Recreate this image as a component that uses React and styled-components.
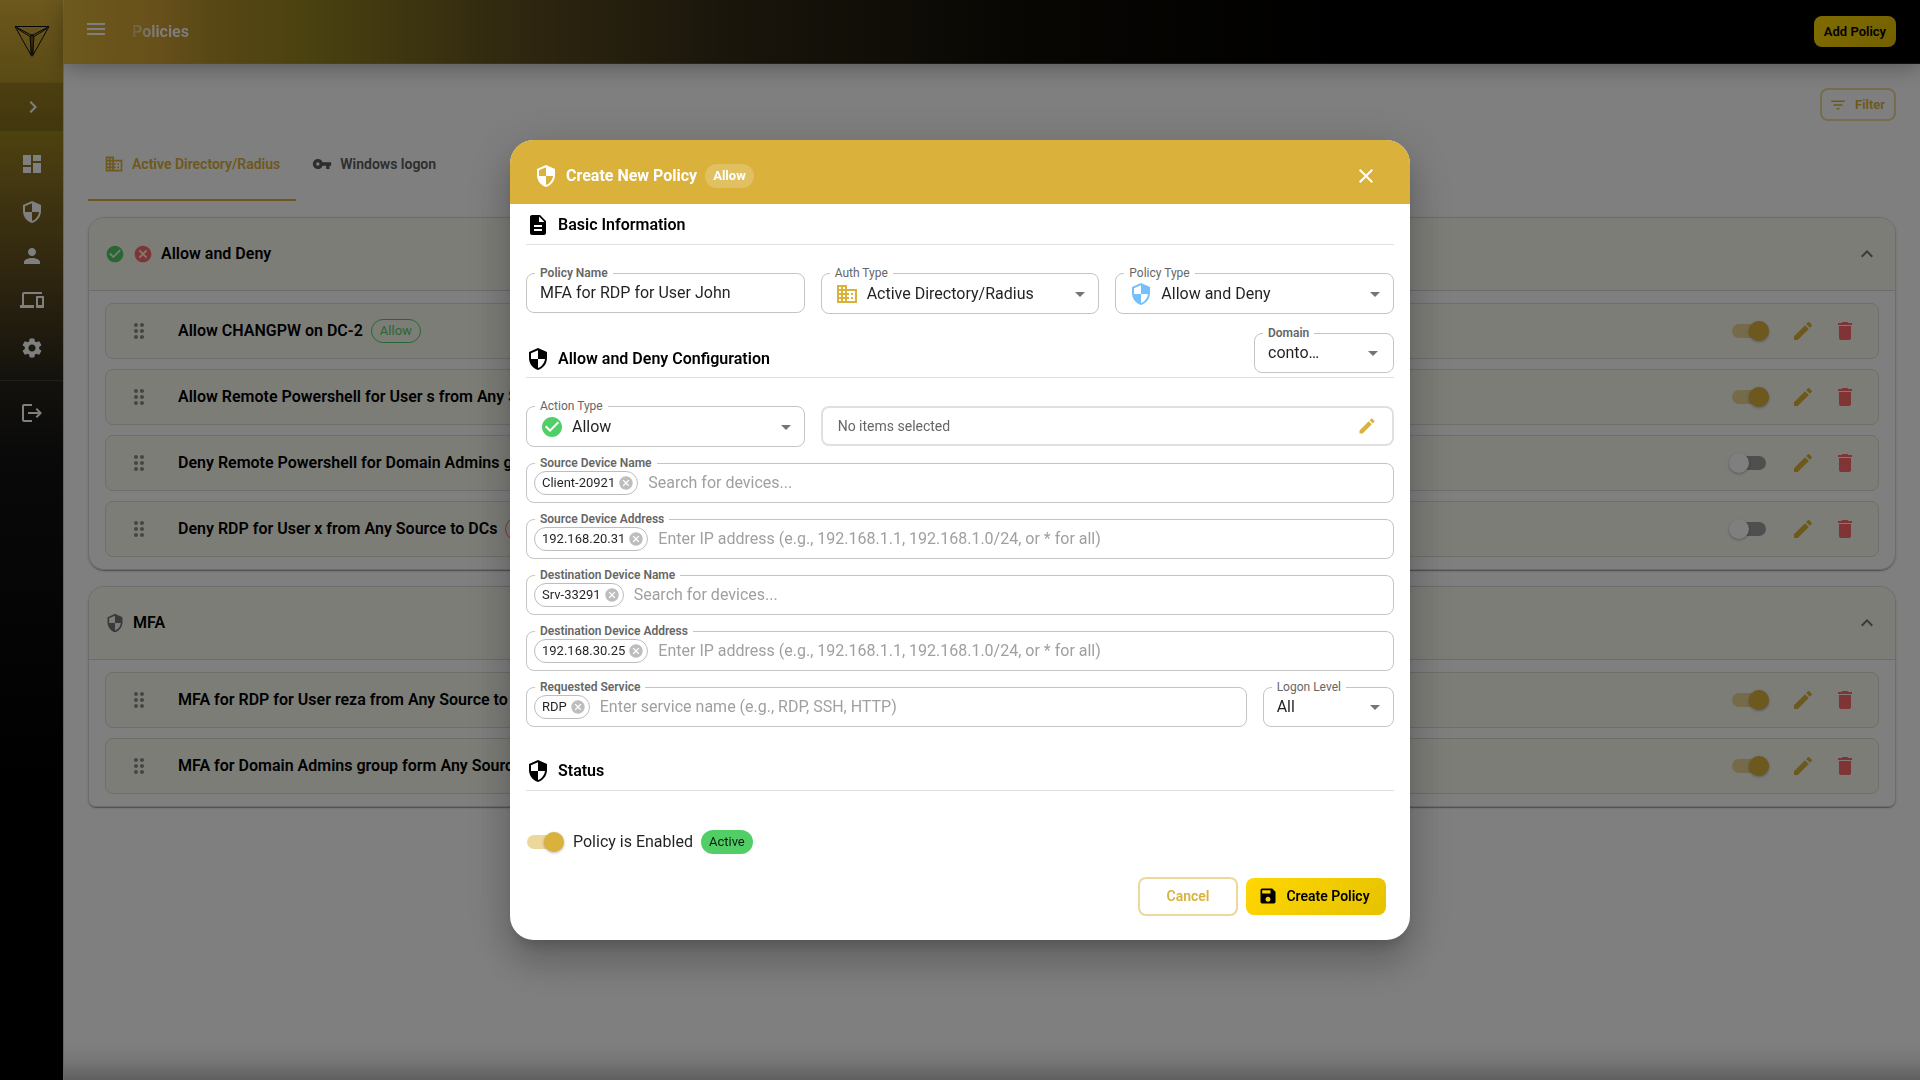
import React, { useId, useState } from 'react'
import styled, { createGlobalStyle, ThemeProvider, css } from 'styled-components'
import {
  MdArrowDropDown,
  MdBusiness,
  MdCancel,
  MdCheckCircle,
  MdChevronRight,
  MdClose,
  MdDashboard,
  MdDelete,
  MdDescription,
  MdDevices,
  MdDragIndicator,
  MdEdit,
  MdExpandLess,
  MdFilterList,
  MdLogout,
  MdMenu,
  MdPerson,
  MdSave,
  MdSecurity,
  MdSettings,
  MdVpnKey,
} from 'react-icons/md'

const theme = {
  color: {
    gold: '#dab13a',
    goldSoft: 'rgba(218, 177, 58, 0.5)',
    green: '#51cf66',
    red: '#ff6b6b',
    blue: '#74c0fc',
    panel: '#fafbf1',
    line: '#e0e0e0',
    outline: '#c4c4c4',
    muted: '#666666',
    icon: '#757575',
  },
}

const GlobalStyle = createGlobalStyle`
  * {
    box-sizing: border-box;
  }
  body {
    margin: 0;
    font-family: Roboto, 'Liberation Sans', sans-serif;
    font-size: 16px;
    line-height: 24px;
    color: #000;
    background: #fff;
  }
  button, input, select {
    font: inherit;
    color: inherit;
  }
  button {
    cursor: pointer;
  }
  svg {
    display: block;
    flex: none;
  }
`

const Page = styled.div`
  display: flex;
  min-height: 100vh;
`

const Sidebar = styled.aside`
  flex: none;
  width: 64px;
  border-right: 1px solid #d0d0d0;
  background: linear-gradient(180deg, #dab13a 0, #9c8420 130px, #5c4a20 280px, #26241a 380px, #121212 460px, #000 800px);
  color: #fff;
`

const Logo = styled.a`
  display: flex;
  justify-content: center;
  align-items: center;
  height: 82px;
  color: #111;
`

const Toggle = styled.button`
  display: flex;
  justify-content: center;
  align-items: center;
  width: 100%;
  height: 50px;
  padding: 0 0 0 2px;
  color: #fff;
  background: rgba(0, 0, 0, 0.15);
  border: solid rgba(218, 177, 58, 0.3);
  border-width: 1px 0;
`

const NavList = styled.nav`
  display: flex;
  flex-direction: column;
  padding: 8px 0;
  border-bottom: ${({ $divided }) => ($divided ? '1px solid rgba(255, 255, 255, 0.12)' : 'none')};
`

const NavLink = styled.a`
  display: flex;
  justify-content: center;
  align-items: center;
  height: ${({ $compact }) => ($compact ? 40 : 48)}px;
  color: #fff;
`

const Main = styled.main`
  flex: 1;
  min-width: 0;
`

const TopBar = styled.header`
  display: flex;
  align-items: center;
  height: 64px;
  padding: 0 24px 0 20px;
  border-bottom: 1px solid rgba(218, 177, 58, 0.2);
  background: linear-gradient(
    90deg,
    #dab13a 0,
    #d0a034 5%,
    #b0902c 8%,
    #968420 13%,
    #5c4c20 25%,
    #332b18 36%,
    #100d06 52%,
    #000 70%
  );
  box-shadow: 0 4px 20px rgba(0, 0, 0, 0.3);
`

const IconButton = styled.button`
  display: flex;
  padding: 0;
  border: 0;
  background: none;
  color: ${({ theme, $tone }) => theme.color[$tone] || $tone};
`

const MenuButton = styled(IconButton)`
  padding-bottom: 5px;
`

const PageTitle = styled.h1`
  flex: 1;
  margin: 0 0 0 24px;
  font-size: 16px;
  font-weight: 600;

  span {
    color: transparent;
    background: linear-gradient(90deg, #dcc078 0, #fff 22px);
    background-clip: text;
  }
`

const Button = styled.button`
  display: flex;
  align-items: center;
  justify-content: center;
  gap: 8px;
  border: 0;
  border-radius: 8px;
  font-weight: 600;
  font-size: ${({ $small }) => ($small ? 13 : 14)}px;
  padding: ${({ $small }) => ($small ? '4px 10px' : '6px 16px 7px 12px')};
  line-height: ${({ $small }) => ($small ? 23 : 24)}px;
  ${({ theme, $outlined }) =>
    $outlined
      ? css`
          color: ${theme.color.gold};
          background: transparent;
          border: 2px solid ${theme.color.goldSoft};
        `
      : css`
          color: #000;
          background: linear-gradient(135deg, #ffd700, #e6c200);
        `}
`

const FilterButton = styled(Button)`
  height: 33px;
  padding: 0 9px 0 7px;
`

const CancelButton = styled(Button)`
  width: 100px;
  height: 39px;
  padding: 0 0 1px;
`

const SubmitButton = styled(Button)`
  min-width: 140px;
`

const Content = styled.div`
  padding: 24px;
`

const Tools = styled.div`
  display: flex;
  justify-content: flex-end;
`

const TabList = styled.div`
  display: flex;
  margin: 8px 0 16px;
`

const Tab = styled.button`
  display: flex;
  align-items: center;
  gap: 8px;
  height: 72px;
  padding: 0 16px;
  border: 0;
  border-bottom: 2px solid ${({ theme, $active }) => ($active ? theme.color.gold : 'transparent')};
  background: none;
  color: ${({ theme, $active }) => ($active ? theme.color.gold : '#5a5a5a')};
  font-size: 14px;
  font-weight: 600;
`

const Group = styled.section`
  margin-bottom: 16px;
  border: 1px solid #d8d8d8;
  border-radius: 16px;
  box-shadow: 0 2px 1px -1px rgba(0, 0, 0, 0.2), 0 1px 1px rgba(0, 0, 0, 0.14), 0 1px 3px rgba(0, 0, 0, 0.12);

  &:last-child {
    border-bottom-left-radius: 8px;
    border-bottom-right-radius: 8px;
  }
`

const GroupHeader = styled.header`
  display: flex;
  align-items: center;
  gap: 8px;
  height: 73px;
  padding: 0 16px;
  border-bottom: 1px solid #d8d8d8;
  border-radius: 15px 15px 0 0;
  background: ${({ theme }) => theme.color.panel};
  color: #757575;
`

const GroupTitle = styled.h2`
  flex: 1;
  margin: 0;
  color: #000;
  font-size: 16px;
  font-weight: 600;
`

const Rows = styled.ul`
  display: flex;
  flex-direction: column;
  gap: 10px;
  margin: 0;
  padding: 12px 16px;
  list-style: none;
`

const Row = styled.li`
  display: flex;
  align-items: center;
  height: 56px;
  padding: 0 21px;
  border: 1px solid #dcdcd4;
  border-radius: 8px;
  background: ${({ theme }) => theme.color.panel};
  color: #8a8a8a;
`

const RowName = styled.div`
  flex: 1;
  display: flex;
  align-items: center;
  gap: 8px;
  margin-left: 27px;
  color: #000;
  font-weight: 600;
  white-space: nowrap;
`

const RowActions = styled.div`
  display: flex;
  align-items: center;
  gap: 18px;
  margin-left: 25px;
`

const chipColors = {
  allow: css`
    border: 1px solid #51cf66;
    color: #51cf66;
  `,
  deny: css`
    border: 1px solid #ff6b6b;
    color: #ff6b6b;
  `,
  header: css`
    color: #fff;
    background: rgba(255, 255, 255, 0.2);
    font-weight: 700;
  `,
  active: css`
    color: rgba(0, 0, 0, 0.87);
    background: #51cf66;
  `,
  value: css`
    border: 1px solid #bdbdbd;
    color: rgba(0, 0, 0, 0.87);
  `,
}

const Chip = styled.span`
  display: inline-flex;
  align-items: center;
  gap: 3px;
  height: 24px;
  padding: 0 8px;
  border-radius: 12px;
  font-size: 13px;
  font-weight: 400;
  ${({ $kind }) => chipColors[$kind]}
`

const ValueChip = styled(Chip)`
  margin-right: 2px;
  padding: 0 3px 0 7px;
`

const Switch = styled.input.attrs({ type: 'checkbox', role: 'switch' })`
  appearance: none;
  position: relative;
  flex: none;
  width: 34px;
  height: 14px;
  margin: 0;
  border-radius: 7px;
  background: #9e9e9e;
  cursor: pointer;

  &::before {
    content: '';
    position: absolute;
    top: -3px;
    left: -3px;
    width: 20px;
    height: 20px;
    border-radius: 50%;
    background: #fff;
    box-shadow: 0 1px 3px rgba(0, 0, 0, 0.3);
  }
  &:checked {
    background: ${({ theme }) => theme.color.goldSoft};
  }
  &:checked::before {
    left: 17px;
    background: ${({ theme }) => theme.color.gold};
  }
`

const BottomShade = styled.div`
  position: fixed;
  right: 0;
  bottom: 0;
  left: 64px;
  height: 36px;
  background: linear-gradient(180deg, rgba(0, 0, 0, 0), rgba(0, 0, 0, 0.08) 50%, rgba(0, 0, 0, 0.25));
  pointer-events: none;
`

const Backdrop = styled.div`
  position: fixed;
  inset: 0;
  display: flex;
  align-items: center;
  justify-content: center;
  background: rgba(0, 0, 0, 0.5);
`

const Dialog = styled.form`
  width: 900px;
  max-width: calc(100% - 64px);
  border-radius: 24px;
  overflow: hidden;
  background: #fff;
  box-shadow: 0 11px 15px -7px rgba(0, 0, 0, 0.2), 0 24px 38px 3px rgba(0, 0, 0, 0.14),
    0 9px 46px 8px rgba(0, 0, 0, 0.12);
`

const DialogHeader = styled.header`
  display: flex;
  align-items: center;
  gap: 8px;
  height: 64px;
  padding: 8px 32px 0 24px;
  background: ${({ theme }) => theme.color.gold};
  color: #fff;
`

const DialogTitle = styled.h2`
  display: flex;
  align-items: center;
  gap: 8px;
  flex: 1;
  margin: 0;
  font-size: 16px;
  font-weight: 700;
`

const DialogBody = styled.div`
  padding: 0 16px;
`

const SectionHead = styled.div`
  display: flex;
  align-items: ${({ $tall }) => ($tall ? 'flex-end' : 'center')};
  gap: 8px;
  padding-bottom: ${({ $tall }) => ($tall ? 4 : 7)}px;
  padding-top: ${({ $tall }) => ($tall ? 19 : 9)}px;
  margin-bottom: 28px;
  border-bottom: 1px solid ${({ theme }) => theme.color.line};
`

const StatusHead = styled(SectionHead)`
  margin-top: 23px;
  margin-bottom: 39px;
`

const SectionTitle = styled.h3`
  display: flex;
  align-items: center;
  gap: 8px;
  flex: 1;
  margin: 0;
  padding-bottom: ${({ $raised }) => ($raised ? 2 : 0)}px;
  font-size: 16px;
  font-weight: 600;
`

const Grid = styled.div`
  display: grid;
  grid-template-columns: repeat(12, 1fr);
  gap: 16px;
`

const FieldBox = styled.div`
  position: relative;
  grid-column: span ${({ $span }) => $span};
  display: flex;
  align-items: center;
  gap: 8px;
  width: ${({ $narrow }) => ($narrow ? '140px' : 'auto')};
  height: ${({ $iconed }) => ($iconed ? 41 : 40)}px;
  padding: ${({ $iconed }) => ($iconed ? 1 : 0)}px ${({ $narrow }) => ($narrow ? 10 : 8)}px 0
    ${({ $chips }) => ($chips ? 7 : 13)}px;
  border: 1px solid ${({ theme }) => theme.color.outline};
  border-radius: 8px;
`

const FieldLabel = styled.label`
  position: absolute;
  top: -9px;
  left: 8px;
  padding: 0 5px;
  background: #fff;
  color: ${({ theme }) => theme.color.muted};
  font-size: 12px;
  line-height: 16px;
  font-weight: ${({ $bold }) => ($bold ? 600 : 400)};
`

const TextInput = styled.input`
  flex: 1;
  min-width: 0;
  height: 24px;
  padding: 0;
  border: 0;
  outline: 0;
  background: none;
  color: rgba(0, 0, 0, 0.87);

  &::placeholder {
    color: #a0a0a0;
    opacity: 1;
  }
`

const SelectInput = styled.select`
  flex: 1;
  min-width: 0;
  height: 24px;
  padding: 0 ${({ $narrow }) => ($narrow ? 28 : 0)}px 0 0;
  border: 0;
  outline: 0;
  appearance: none;
  background: none;
  color: rgba(0, 0, 0, 0.87);
  text-overflow: ellipsis;
`

const SelectArrow = styled(MdArrowDropDown)`
  margin: 0 -2px 0 0;
  color: ${({ theme }) => theme.color.icon};
`

const ItemsBox = styled.div`
  grid-column: span 8;
  display: flex;
  align-items: center;
  justify-content: space-between;
  height: 40px;
  padding: 0 15px 1px;
  border: 2px solid ${({ theme }) => theme.color.line};
  border-radius: 8px;
  color: ${({ theme }) => theme.color.muted};
  font-size: 14px;
`

const StatusLabel = styled.label`
  display: flex;
  align-items: center;
  gap: 12px;
  color: rgba(0, 0, 0, 0.87);
`

const StatusRow = styled.div`
  display: flex;
  align-items: center;
  gap: 8px;
  padding-left: 1px;
`

const DialogActions = styled.footer`
  display: flex;
  align-items: center;
  justify-content: flex-end;
  gap: 8px;
  padding: 23px 24px 24px;
`

const LogoMark = () => (
  <svg width="36" height="32" viewBox="0 0 36 32" fill="none" stroke="currentColor" strokeWidth="1">
    <path d="M1 1.500h34L18.500 31h-1z" />
    <path d="M1 1.500l16 8.500v20M35 1.500L19 10v20M3 3.500l13 8 1.500 18M33 3.500l-13 8-1.500 18M17 10l1-.5 1 .5M16 11.500l2-1 2 1" />
  </svg>
)

const navItems = [
  { name: 'Dashboard', icon: MdDashboard },
  { name: 'Policies', icon: MdSecurity },
  { name: 'Users', icon: MdPerson, compact: true },
  { name: 'Devices', icon: MdDevices },
  { name: 'Settings', icon: MdSettings },
]

const allowDeny = [
  { name: 'Allow CHANGPW on DC-2', kind: 'allow', on: true },
  { name: 'Allow Remote Powershell for User s from Any Source', kind: 'allow', on: true },
  { name: 'Deny Remote Powershell for Domain Admins group', kind: 'deny', on: false },
  { name: 'Deny RDP for User x from Any Source to DCs', kind: 'deny', on: false },
]

const mfa = [
  { name: 'MFA for RDP for User reza from Any Source to DCs', on: true },
  { name: 'MFA for Domain Admins group form Any Source', on: true },
]

const searchFields = [
  { label: 'Source Device Name', value: 'Client-20921', hint: 'Search for devices...' },
  {
    label: 'Source Device Address',
    value: '192.168.20.31',
    hint: 'Enter IP address (e.g., 192.168.1.1, 192.168.1.0/24, or * for all)',
  },
  { label: 'Destination Device Name', value: 'Srv-33291', hint: 'Search for devices...' },
  {
    label: 'Destination Device Address',
    value: '192.168.30.25',
    hint: 'Enter IP address (e.g., 192.168.1.1, 192.168.1.0/24, or * for all)',
  },
  { label: 'Requested Service', value: 'RDP', hint: 'Enter service name (e.g., RDP, SSH, HTTP)', span: 10 },
]

const PolicyRow = ({ policy }) => {
  const [on, setOn] = useState(policy.on)
  return (
    <Row>
      <MdDragIndicator size={24} />
      <RowName>
        {policy.name}
        {policy.kind && <Chip $kind={policy.kind}>{policy.kind === 'allow' ? 'Allow' : 'Deny'}</Chip>}
      </RowName>
      <Switch checked={on} onChange={() => setOn(!on)} aria-label={`Enable ${policy.name}`} />
      <RowActions>
        <IconButton $tone="gold" aria-label="Edit"><MdEdit size={24} /></IconButton>
        <IconButton $tone="red" aria-label="Delete"><MdDelete size={24} /></IconButton>
      </RowActions>
    </Row>
  )
}

const PolicyGroup = ({ title, icons, policies }) => (
  <Group>
    <GroupHeader>
      {icons}
      <GroupTitle>{title}</GroupTitle>
      <IconButton $tone="icon" aria-label="Collapse"><MdExpandLess size={24} /></IconButton>
    </GroupHeader>
    <Rows>
      {policies.map((policy) => <PolicyRow key={policy.name} policy={policy} />)}
    </Rows>
  </Group>
)

const SelectField = ({ label, value, icon, span, bold, narrow }) => {
  const id = useId()
  return (
    <FieldBox $span={span} $iconed={!!icon} $narrow={narrow}>
      <FieldLabel htmlFor={id} $bold={bold}>{label}</FieldLabel>
      {icon}
      <SelectInput id={id} $narrow={narrow}>
        <option>{value}</option>
      </SelectInput>
      <SelectArrow size={24} />
    </FieldBox>
  )
}

const SearchField = ({ label, value, hint, span = 12 }) => {
  const id = useId()
  return (
    <FieldBox $span={span} $chips>
      <FieldLabel htmlFor={id} $bold>{label}</FieldLabel>
      <ValueChip $kind="value">
        {value}
        <IconButton type="button" $tone="#bdbdbd" aria-label={`Remove ${value}`}><MdCancel size={16} /></IconButton>
      </ValueChip>
      <TextInput id={id} placeholder={hint} />
    </FieldBox>
  )
}

const PolicyDialog = () => {
  const [enabled, setEnabled] = useState(true)
  return (
    <Backdrop>
      <Dialog role="dialog" aria-label="Create New Policy" onSubmit={(e) => e.preventDefault()}>
        <DialogHeader>
          <MdSecurity size={24} />
          <DialogTitle>
            Create New Policy
            <Chip $kind="header">Allow</Chip>
          </DialogTitle>
          <IconButton type="button" $tone="#fff" aria-label="Close"><MdClose size={24} /></IconButton>
        </DialogHeader>
        <DialogBody>
          <SectionHead>
            <SectionTitle><MdDescription size={24} />Basic Information</SectionTitle>
          </SectionHead>
          <Grid>
            <FieldBox $span={4}>
              <FieldLabel htmlFor="policy-name" $bold>Policy Name</FieldLabel>
              <TextInput id="policy-name" defaultValue="MFA for RDP for User John" />
            </FieldBox>
            <SelectField span={4} label="Auth Type" value="Active Directory/Radius" icon={<MdBusiness size={24} color={theme.color.gold} />} />
            <SelectField span={4} label="Policy Type" value="Allow and Deny" icon={<MdSecurity size={24} color={theme.color.blue} />} />
          </Grid>
          <SectionHead $tall>
            <SectionTitle $raised><MdSecurity size={24} />Allow and Deny Configuration</SectionTitle>
            <SelectField label="Domain" value="contoso.com" bold narrow />
          </SectionHead>
          <Grid>
            <SelectField span={4} label="Action Type" value="Allow" icon={<MdCheckCircle size={24} color={theme.color.green} />} />
            <ItemsBox>
              No items selected
              <IconButton type="button" $tone="gold" aria-label="Edit items"><MdEdit size={20} /></IconButton>
            </ItemsBox>
            {searchFields.map((field) => <SearchField key={field.label} {...field} />)}
            <SelectField span={2} label="Logon Level" value="All" />
          </Grid>
          <StatusHead>
            <SectionTitle><MdSecurity size={24} />Status</SectionTitle>
          </StatusHead>
          <StatusRow>
            <StatusLabel>
              <Switch checked={enabled} onChange={() => setEnabled(!enabled)} />
              Policy is Enabled
            </StatusLabel>
            <Chip $kind="active">Active</Chip>
          </StatusRow>
        </DialogBody>
        <DialogActions>
          <CancelButton type="button" $outlined>Cancel</CancelButton>
          <SubmitButton type="submit"><MdSave size={20} />Create Policy</SubmitButton>
        </DialogActions>
      </Dialog>
    </Backdrop>
  )
}

const App = () => {
  return (
    <ThemeProvider theme={theme}>
      <GlobalStyle />
      <Page>
        <Sidebar>
          <Logo href="#" aria-label="Home"><LogoMark /></Logo>
          <Toggle aria-label="Expand menu"><MdChevronRight size={24} /></Toggle>
          <NavList $divided>
            {navItems.map(({ name, icon: Icon, compact }) => (
              <NavLink key={name} href="#" aria-label={name} $compact={compact}><Icon size={24} /></NavLink>
            ))}
          </NavList>
          <NavList>
            <NavLink href="#" aria-label="Log out"><MdLogout size={24} /></NavLink>
          </NavList>
        </Sidebar>
        <Main>
          <TopBar>
            <MenuButton $tone="#fff" aria-label="Menu"><MdMenu size={24} /></MenuButton>
            <PageTitle><span>Policies</span></PageTitle>
            <Button $small>Add Policy</Button>
          </TopBar>
          <Content>
            <Tools>
              <FilterButton $small $outlined><MdFilterList size={18} />Filter</FilterButton>
            </Tools>
            <TabList role="tablist">
              <Tab role="tab" aria-selected="true" $active><MdBusiness size={20} />Active Directory/Radius</Tab>
              <Tab role="tab" aria-selected="false"><MdVpnKey size={20} />Windows logon</Tab>
            </TabList>
            <PolicyGroup
              title="Allow and Deny"
              policies={allowDeny}
              icons={<><MdCheckCircle size={20} color={theme.color.green} /><MdCancel size={20} color={theme.color.red} /></>}
            />
            <PolicyGroup title="MFA" policies={mfa} icons={<MdSecurity size={20} />} />
          </Content>
        </Main>
      </Page>
      <BottomShade />
      <PolicyDialog />
    </ThemeProvider>
  )
}

export default App
